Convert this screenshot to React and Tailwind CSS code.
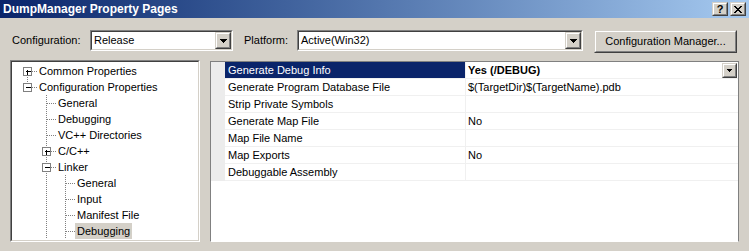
const font = { fontFamily: '"Liberation Sans", Arial, sans-serif' };

const TREE = [
  { label: "Common Properties", level: 0, box: "+", above: false, below: true, rails: [] },
  { label: "Configuration Properties", level: 0, box: "-", above: true, below: false, rails: [] },
  { label: "General", level: 1, above: true, below: true, rails: [] },
  { label: "Debugging", level: 1, above: true, below: true, rails: [] },
  { label: "VC++ Directories", level: 1, above: true, below: true, rails: [] },
  { label: "C/C++", level: 1, box: "+", above: true, below: true, rails: [] },
  { label: "Linker", level: 1, box: "-", above: true, below: true, rails: [] },
  { label: "General", level: 2, above: true, below: true, rails: [1] },
  { label: "Input", level: 2, above: true, below: true, rails: [1] },
  { label: "Manifest File", level: 2, above: true, below: true, rails: [1] },
  { label: "Debugging", level: 2, above: true, below: true, rails: [1], selected: true },
];

const PROPS = [
  ["Generate Debug Info", "Yes (/DEBUG)"],
  ["Generate Program Database File", "$(TargetDir)$(TargetName).pdb"],
  ["Strip Private Symbols", ""],
  ["Generate Map File", "No"],
  ["Map File Name", ""],
  ["Map Exports", "No"],
  ["Debuggable Assembly", ""],
];

// x of a tree level's line, relative to the tree's inner left edge
const lineX = (level) => 15 + 19 * level;

function Arrow({ small }) {
  return small ? (
    <svg width="5" height="3" viewBox="0 0 5 3" shapeRendering="crispEdges">
      <path d="M0 0h5v1H0zM1 1h3v1H1zM2 2h1v1H2z" fill="#000" />
    </svg>
  ) : (
    <svg width="7" height="4" viewBox="0 0 7 4" shapeRendering="crispEdges">
      <path d="M0 0h7v1H0zM1 1h5v1H1zM2 2h3v1H2zM3 3h1v1H3z" fill="#000" />
    </svg>
  );
}

function Raised({ className, children }) {
  return (
    <div className={`border border-t-[#d4d0c8] border-l-[#d4d0c8] border-r-[#404040] border-b-[#404040] bg-[#d4d0c8] ${className}`}>
      <div className="flex h-full w-full items-center justify-center border border-t-white border-l-white border-r-[#808080] border-b-[#808080]">
        {children}
      </div>
    </div>
  );
}

function Sunken({ className, children }) {
  return (
    <div className={`border border-t-[#808080] border-l-[#808080] border-r-white border-b-white ${className}`}>
      <div className="h-full w-full border border-t-[#404040] border-l-[#404040] border-r-[#d4d0c8] border-b-[#d4d0c8] bg-white">
        {children}
      </div>
    </div>
  );
}

function Combo({ value, className }) {
  return (
    <Sunken className={`h-[21px] ${className}`}>
      <div className="flex h-full">
        <span className="flex-1 pl-[2px] text-[11px] leading-[17px] text-black">{value}</span>
        <Raised className="h-[17px] w-[16px]">
          <Arrow />
        </Raised>
      </div>
    </Sunken>
  );
}

function Connector({ item }) {
  const x = lineX(item.level) + 0.5;
  const w = lineX(item.level) + 10;
  const dot = { stroke: "#808080", strokeDasharray: "1 1", shapeRendering: "crispEdges" };
  return (
    <svg width={w} height="16" className="shrink-0">
      {item.rails.map((r) => (
        <line key={r} x1={lineX(r) + 0.5} y1="0" x2={lineX(r) + 0.5} y2="16" {...dot} />
      ))}
      {item.above && <line x1={x} y1="0" x2={x} y2="8" {...dot} />}
      {item.below && <line x1={x} y1="8" x2={x} y2="16" {...dot} />}
      <line x1={x} y1="8.5" x2={x + 9} y2="8.5" {...dot} />
      {item.box && (
        <g shapeRendering="crispEdges">
          <rect x={x - 4} y="4.5" width="8" height="8" fill="#fff" stroke="#808080" />
          <line x1={x - 2} y1="8.5" x2={x + 3} y2="8.5" stroke="#000" />
          {item.box === "+" && <line x1={x} y1="6.5" x2={x} y2="11.5" stroke="#000" />}
        </g>
      )}
    </svg>
  );
}

export default function App() {
  return (
    <div className="h-[251px] w-[749px] overflow-hidden bg-[#d4d0c8] text-[11px] text-black" style={font}>
      <div className="flex h-[18px] items-center bg-gradient-to-r from-[#0a246a] to-[#a6caf0] pl-[3px] pr-[3px]">
        <span className="flex-1 text-[12px] font-bold text-white">DumpManager Property Pages</span>
        <Raised className="h-[14px] w-[16px]">
          <span className="text-[11px] font-bold leading-none">?</span>
        </Raised>
        <Raised className="ml-[2px] h-[14px] w-[16px]">
          <svg width="8" height="7" viewBox="0 0 8 7" shapeRendering="crispEdges">
            <path d="M0 0h2v1H0zM6 0h2v1H6zM1 1h2v1H1zM5 1h2v1H5zM2 2h4v1H2zM3 3h2v1H3zM2 4h4v1H2zM1 5h2v1H1zM5 5h2v1H5zM0 6h2v1H0zM6 6h2v1H6z" fill="#000" />
          </svg>
        </Raised>
      </div>

      <div className="mt-[12px] flex h-[23px] items-start pl-[12px]">
        <span className="w-[78px] leading-[21px]">Configuration:</span>
        <Combo value="Release" className="w-[143px]" />
        <span className="ml-[11px] w-[53px] leading-[21px]">Platform:</span>
        <Combo value="Active(Win32)" className="w-[286px]" />
        <Raised className="ml-[11px] h-[23px] w-[143px]">
          <span>Configuration Manager...</span>
        </Raised>
      </div>

      <div className="mt-[7px] flex gap-[10px] px-[10px]">
        <Sunken className="h-[182px] w-[190px]">
          <div className="overflow-hidden pt-px">
            {TREE.map((item, i) => (
              <div key={i} className="flex h-4 items-center">
                <Connector item={item} />
                <span className={`whitespace-nowrap px-[2px] leading-4 ${item.selected ? "bg-[#d4d0c8]" : ""}`}>
                  {item.label}
                </span>
              </div>
            ))}
          </div>
        </Sunken>

        <div className="mt-px h-[181px] w-[529px] border border-[#808080] border-b-white bg-white">
          {PROPS.map(([name, value], i) => (
            <div key={i} className="flex h-[17px]">
              <div className="w-[14px] bg-[#ececec]" />
              <div
                className={`w-[240px] border-b border-[#f0f0f0] pl-[3px] leading-4 ${i === 0 ? "bg-[#0a246a] text-white" : ""}`}
              >
                {name}
              </div>
              <div className="flex flex-1 border-b border-l border-[#f0f0f0] pl-[2px] leading-4">
                <span className={i === 0 ? "font-bold" : ""}>{value}</span>
                {i === 0 && (
                  <Raised className="ml-auto mr-px mt-px h-[15px] w-[15px]">
                    <Arrow small />
                  </Raised>
                )}
              </div>
            </div>
          ))}
        </div>
      </div>
    </div>
  );
}
